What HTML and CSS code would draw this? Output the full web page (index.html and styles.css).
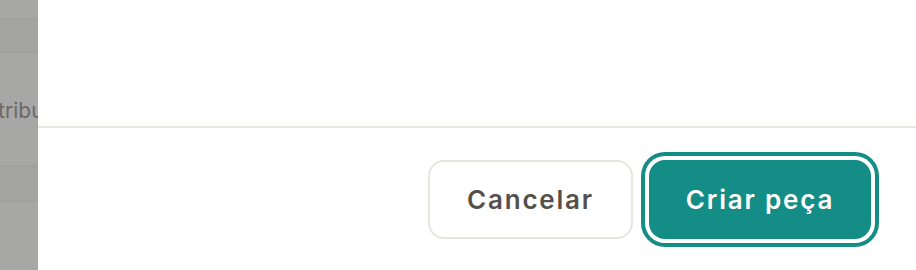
FILE: index.html
```html
<!DOCTYPE html>
<html lang="pt">
<head>
  <meta charset="UTF-8" />
  <meta name="viewport" content="width=device-width, initial-scale=1.0" />
  <title>Criar peça</title>
  <link rel="stylesheet" href="styles.css">
</head>
<body>
  <div class="page">
    <aside class="backdrop">
      <div class="row row-head"></div>
      <div class="row row-label">Atributos</div>
      <div class="row row-band"></div>
    </aside>

    <div class="modal">
      <div class="modal-body"></div>
      <footer class="modal-footer">
        <button class="btn btn-secondary">Cancelar</button>
        <button class="btn btn-primary">Criar peça</button>
      </footer>
    </div>
  </div>
</body>
</html>
```

FILE: styles.css
```css
body {
  margin: 0;
  font-family: 'Inter', 'Noto Sans', sans-serif;
  background: #fff;
}

.page {
  display: flex;
  height: 270px;
  overflow: hidden;
}

.backdrop {
  width: 38px;
  flex-shrink: 0;
  background: #a7a7a5;
  overflow: hidden;
  display: flex;
  flex-direction: column;
}

.row {
  white-space: nowrap;
}

.row-head {
  height: 30px;
  margin-top: 18px;
  border-top: 3px solid #a0a09e;
  border-bottom: 2px solid #a0a09e;
  background: #a3a3a1;
}

.row-label {
  height: 112px;
  padding-top: 45px;
  box-sizing: border-box;
  font-size: 21px;
  color: #6b6966;
  text-indent: -16px;
}

.row-band {
  height: 33px;
  border-top: 2px solid #a0a09e;
  border-bottom: 2px solid #a0a09e;
  background: #a3a3a1;
}

.modal {
  flex: 1;
  background: #fff;
  display: flex;
  flex-direction: column;
}

.modal-body {
  height: 126px;
}

.modal-footer {
  border-top: 2px solid #ebe7e3;
  display: flex;
  justify-content: flex-end;
  gap: 16px;
  padding: 32px 45px 0 0;
}

.btn {
  height: 79px;
  border-radius: 16px;
  font-family: 'Inter', 'Noto Sans', sans-serif;
  font-size: 26px;
  font-weight: 600;
  letter-spacing: 1.8px;
  cursor: pointer;
}

.btn-secondary {
  width: 205px;
  background: #fff;
  border: 2px solid #e8e4df;
  color: #55504b;
}

.btn-primary {
  width: 222px;
  background: #138d85;
  border: none;
  color: #fff;
  box-shadow: 0 0 0 4px #fff, 0 0 0 8px #138d85;
}
```
